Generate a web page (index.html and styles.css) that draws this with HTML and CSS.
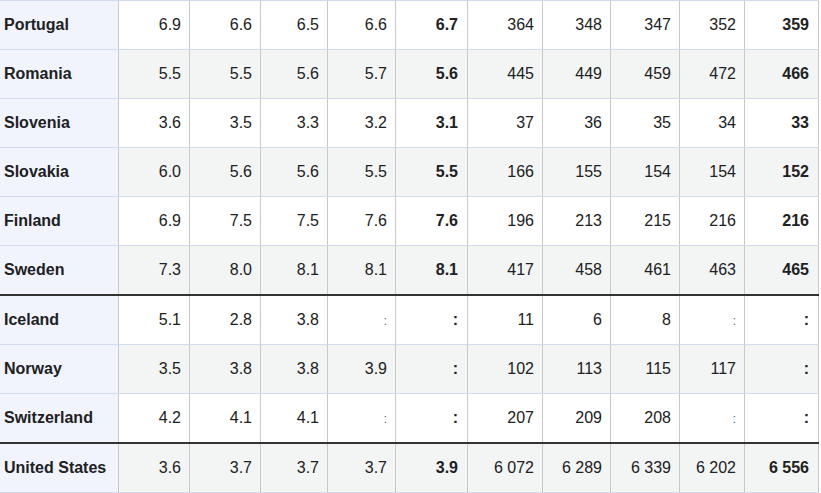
FILE: index.html
```html
<!DOCTYPE html>
<html>
<head>
<meta charset="utf-8">
<link rel="stylesheet" href="styles.css">
</head>
<body>
<div class="table">
  <div class="row">
    <div class="c name">Portugal</div><div class="c">6.9</div><div class="c">6.6</div><div class="c">6.5</div><div class="c">6.6</div><div class="c b">6.7</div><div class="c">364</div><div class="c">348</div><div class="c">347</div><div class="c">352</div><div class="c b">359</div>
  </div>
  <div class="row alt">
    <div class="c name">Romania</div><div class="c">5.5</div><div class="c">5.5</div><div class="c">5.6</div><div class="c">5.7</div><div class="c b">5.6</div><div class="c">445</div><div class="c">449</div><div class="c">459</div><div class="c">472</div><div class="c b">466</div>
  </div>
  <div class="row">
    <div class="c name">Slovenia</div><div class="c">3.6</div><div class="c">3.5</div><div class="c">3.3</div><div class="c">3.2</div><div class="c b">3.1</div><div class="c">37</div><div class="c">36</div><div class="c">35</div><div class="c">34</div><div class="c b">33</div>
  </div>
  <div class="row alt">
    <div class="c name">Slovakia</div><div class="c">6.0</div><div class="c">5.6</div><div class="c">5.6</div><div class="c">5.5</div><div class="c b">5.5</div><div class="c">166</div><div class="c">155</div><div class="c">154</div><div class="c">154</div><div class="c b">152</div>
  </div>
  <div class="row">
    <div class="c name">Finland</div><div class="c">6.9</div><div class="c">7.5</div><div class="c">7.5</div><div class="c">7.6</div><div class="c b">7.6</div><div class="c">196</div><div class="c">213</div><div class="c">215</div><div class="c">216</div><div class="c b">216</div>
  </div>
  <div class="row alt thick">
    <div class="c name">Sweden</div><div class="c">7.3</div><div class="c">8.0</div><div class="c">8.1</div><div class="c">8.1</div><div class="c b">8.1</div><div class="c">417</div><div class="c">458</div><div class="c">461</div><div class="c">463</div><div class="c b">465</div>
  </div>
  <div class="row">
    <div class="c name">Iceland</div><div class="c">5.1</div><div class="c">2.8</div><div class="c">3.8</div><div class="c na">:</div><div class="c b">:</div><div class="c">11</div><div class="c">6</div><div class="c">8</div><div class="c na">:</div><div class="c b">:</div>
  </div>
  <div class="row alt">
    <div class="c name">Norway</div><div class="c">3.5</div><div class="c">3.8</div><div class="c">3.8</div><div class="c">3.9</div><div class="c b">:</div><div class="c">102</div><div class="c">113</div><div class="c">115</div><div class="c">117</div><div class="c b">:</div>
  </div>
  <div class="row thick">
    <div class="c name">Switzerland</div><div class="c">4.2</div><div class="c">4.1</div><div class="c">4.1</div><div class="c na">:</div><div class="c b">:</div><div class="c">207</div><div class="c">209</div><div class="c">208</div><div class="c na">:</div><div class="c b">:</div>
  </div>
  <div class="row alt">
    <div class="c name">United States</div><div class="c">3.6</div><div class="c">3.7</div><div class="c">3.7</div><div class="c">3.7</div><div class="c b">3.9</div><div class="c">6 072</div><div class="c">6 289</div><div class="c">6 339</div><div class="c">6 202</div><div class="c b">6 556</div>
  </div>
</div>
</body>
</html>
```
FILE: styles.css
```css
html, body {
  margin: 0;
  padding: 0;
  background: #ffffff;
}
body {
  font-family: "Liberation Sans", Arial, sans-serif;
  font-size: 16px;
  color: #202122;
}
.table {
  width: 819px;
  border-top: 1px solid #d2daf0;
}
.row {
  display: grid;
  grid-template-columns: 119px 71px 71px 67px 68px 72px 75px 68px 69px 65px 74px;
  height: 49px;
  box-sizing: border-box;
  border-bottom: 1px solid #d2daf0;
  background: #ffffff;
}
.row.alt {
  background: #f3f4f4;
}
.row.thick {
  height: 50px;
  border-bottom: 2px solid #333333;
}
.c {
  display: flex;
  align-items: center;
  justify-content: flex-end;
  padding-right: 8px;
  border-right: 1px solid #c8c9cc;
  white-space: nowrap;
}
.c.name {
  justify-content: flex-start;
  padding-left: 4px;
  padding-right: 0;
  font-weight: bold;
  background: #f1f4fd;
}
.c.b {
  font-weight: bold;
  padding-right: 9px;
}
.c.na {
  color: #4a6a9a;
  font-size: 13px;
}
```
